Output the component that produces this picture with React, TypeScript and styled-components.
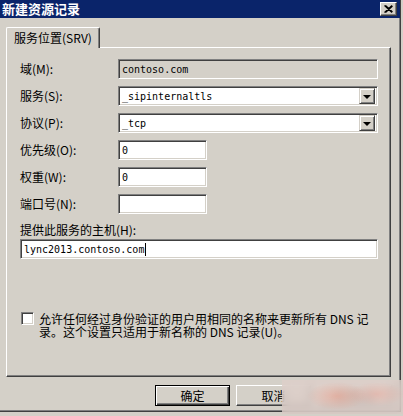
import React from "react";
import styled, { createGlobalStyle } from "styled-components";

const GlobalStyle = createGlobalStyle`
  html, body { margin: 0; padding: 0; background: #d4d0c8; }
  body {
    width: 403px; height: 416px; overflow: hidden;
    font-family: "Noto Sans CJK SC", "Noto Sans", sans-serif;
    font-size: 12px; color: #000;
  }
`;

const Window = styled.div`
  position: relative;
  box-sizing: border-box;
  width: 401px;
  height: 412px;
  background: #d4d0c8;
  border-right: 1px solid #404040;
  border-bottom: 1px solid #404040;
  box-shadow: inset -1px -1px #808080;
  display: flex;
  flex-direction: column;
`;

const TitleBar = styled.div`
  height: 18px;
  background: #0a246a;
  display: flex;
  align-items: center;
  justify-content: space-between;
  padding: 0 3px 0 2px;
`;

const Title = styled.span`
  color: #fff;
  font-weight: 700;
  font-size: 13px;
  line-height: 18px;
  letter-spacing: 0;
`;

const CloseButton = styled.div`
  box-sizing: border-box;
  width: 17px;
  height: 14px;
  background: #d4d0c8;
  border-top: 1px solid #fff;
  border-left: 1px solid #fff;
  border-right: 1px solid #404040;
  border-bottom: 1px solid #404040;
  box-shadow: inset -1px -1px #808080;
  display: flex;
  align-items: center;
  justify-content: center;
`;

const Body = styled.div`
  flex: 1;
  display: flex;
  flex-direction: column;
  padding: 9px 9px 0 6px;
`;

const TabStrip = styled.div`
  display: flex;
  height: 20px;
`;

const Tab = styled.div`
  position: relative;
  z-index: 1;
  box-sizing: border-box;
  width: 94px;
  height: 21px;
  margin-bottom: -1px;
  background: #d4d0c8;
  border-top: 1px solid #fff;
  border-left: 1px solid #fff;
  border-right: 1px solid #404040;
  box-shadow: inset -1px 0 #808080;
  border-radius: 2px 2px 0 0;
  padding: 2px 0 0 7px;
  line-height: 15px;
  white-space: nowrap;
`;

const Panel = styled.div`
  box-sizing: border-box;
  width: 385px;
  height: 330px;
  border-top: 1px solid #fff;
  border-left: 1px solid #fff;
  border-right: 1px solid #404040;
  border-bottom: 1px solid #404040;
  box-shadow: inset -1px -1px #808080;
  padding: 11px 12px 0 13px;
  display: flex;
  flex-direction: column;
`;

const FormGrid = styled.div`
  display: grid;
  grid-template-columns: 98px 1fr;
  grid-auto-rows: 20px;
  row-gap: 7px;
  align-items: center;
`;

const Label = styled.label`
  line-height: 14px;
  white-space: nowrap;
`;

const Field = styled.div<{ $width?: number; $disabled?: boolean }>`
  box-sizing: border-box;
  width: ${(p) => (p.$width ? `${p.$width}px` : "100%")};
  height: 20px;
  background: ${(p) => (p.$disabled ? "#d4d0c8" : "#fff")};
  border-top: 1px solid #808080;
  border-left: 1px solid #808080;
  border-right: 1px solid #fff;
  border-bottom: 1px solid #fff;
  box-shadow: inset 1px 1px #404040, inset -1px -1px #d4d0c8;
  padding: 0 2px 0 3px;
  display: flex;
  align-items: center;
  font-family: "DejaVu Sans Mono", "Liberation Mono", monospace;
  font-size: 10px;
  white-space: nowrap;
  overflow: hidden;
`;

const ComboText = styled.span`
  flex: 1;
`;

const DropButton = styled.div`
  box-sizing: border-box;
  width: 16px;
  height: 16px;
  background: #d4d0c8;
  border-top: 1px solid #d4d0c8;
  border-left: 1px solid #d4d0c8;
  border-right: 1px solid #404040;
  border-bottom: 1px solid #404040;
  box-shadow: inset 1px 1px #fff, inset -1px -1px #808080;
  display: flex;
  align-items: center;
  justify-content: center;
`;

const Arrow = styled.span`
  width: 0;
  height: 0;
  border-left: 4px solid transparent;
  border-right: 4px solid transparent;
  border-top: 4px solid #000;
  margin-top: 1px;
`;

const Caret = styled.span`
  display: inline-block;
  width: 1px;
  height: 13px;
  background: #000;
  margin-left: 1px;
`;

const HostLabel = styled.label`
  margin-top: 9px;
  line-height: 14px;
`;

const HostField = styled(Field)`
  margin-top: 2px;
`;

const CheckRow = styled.div`
  display: flex;
  align-items: flex-start;
  margin-top: 53px;
  padding-left: 1px;
`;

const CheckBox = styled.span`
  box-sizing: border-box;
  flex: none;
  width: 13px;
  height: 13px;
  background: #fff;
  border-top: 1px solid #808080;
  border-left: 1px solid #808080;
  border-right: 1px solid #fff;
  border-bottom: 1px solid #fff;
  box-shadow: inset 1px 1px #404040, inset -1px -1px #d4d0c8;
  margin-top: 0;
`;

const CheckText = styled.span`
  margin-left: 5px;
  line-height: 13px;
  margin-top: 0;
`;

const ButtonRow = styled.div`
  display: flex;
  justify-content: flex-end;
  gap: 6px;
  margin-top: 8px;
  margin-right: -1px;
`;

const Button = styled.div<{ $default?: boolean }>`
  box-sizing: border-box;
  width: 75px;
  height: 21px;
  background: #d4d0c8;
  display: flex;
  align-items: center;
  justify-content: center;
  line-height: 14px;
  ${(p) =>
    p.$default
      ? `border: 1px solid #000; box-shadow: inset 1px 1px #fff, inset -1px -1px #404040, inset -2px -2px #808080;`
      : `border-top: 1px solid #fff; border-left: 1px solid #fff; border-right: 1px solid #404040; border-bottom: 1px solid #404040; box-shadow: inset -1px -1px #808080;`}
`;

const Watermark = styled.div`
  position: absolute;
  left: 282px;
  top: 380px;
  width: 121px;
  height: 34px;
  backdrop-filter: blur(4px);
  background:
    radial-gradient(ellipse 30px 14px at 55px 16px, rgba(236, 160, 140, 0.55), transparent),
    radial-gradient(ellipse 28px 12px at 95px 14px, rgba(236, 165, 150, 0.45), transparent),
    rgba(222, 205, 200, 0.75);
`;

export default function App() {
  return (
    <>
      <GlobalStyle />
      <Window>
        <TitleBar>
          <Title>新建资源记录</Title>
          <CloseButton>
            <svg width="9" height="8" viewBox="0 0 9 8">
              <path d="M0.5 0.5 L8 7.5 M1.5 0.5 L8.5 7 M8 0.5 L0.5 7.5 M8.5 1 L1.5 7.5" stroke="#000" strokeWidth="1.2" fill="none" />
            </svg>
          </CloseButton>
        </TitleBar>
        <Body>
          <TabStrip>
            <Tab>服务位置(SRV)</Tab>
          </TabStrip>
          <Panel>
            <FormGrid>
              <Label>域(M):</Label>
              <Field $disabled>contoso.com</Field>
              <Label>服务(S):</Label>
              <Field>
                <ComboText>_sipinternaltls</ComboText>
                <DropButton><Arrow /></DropButton>
              </Field>
              <Label>协议(P):</Label>
              <Field>
                <ComboText>_tcp</ComboText>
                <DropButton><Arrow /></DropButton>
              </Field>
              <Label>优先级(O):</Label>
              <Field $width={89}>0</Field>
              <Label>权重(W):</Label>
              <Field $width={89}>0</Field>
              <Label>端口号(N):</Label>
              <Field $width={89}></Field>
            </FormGrid>
            <HostLabel>提供此服务的主机(H):</HostLabel>
            <HostField>
              lync2013.contoso.com<Caret />
            </HostField>
            <CheckRow>
              <CheckBox />
              <CheckText>
                允许任何经过身份验证的用户用相同的名称来更新所有 DNS 记
                <br />
                录。这个设置只适用于新名称的 DNS 记录(U)。
              </CheckText>
            </CheckRow>
          </Panel>
          <ButtonRow>
            <Button $default>确定</Button>
            <Button>取消</Button>
            <Button>应用(A)</Button>
          </ButtonRow>
        </Body>
        <Watermark />
      </Window>
    </>
  );
}
